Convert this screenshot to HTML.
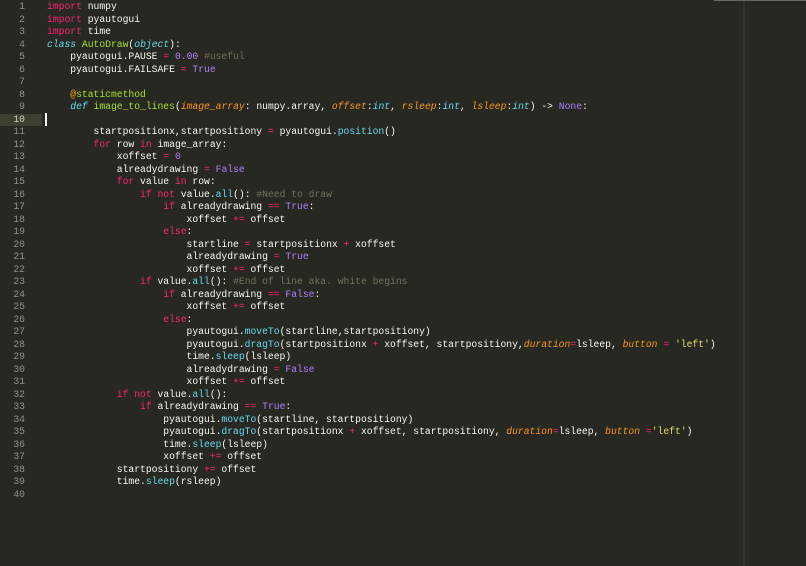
<!DOCTYPE html><html><head><meta charset="utf-8"><style>
body{margin:0;background:#272822;width:806px;height:566px;overflow:hidden;position:relative}
.g{position:absolute;left:0;top:0;width:42px}
.c{position:absolute;left:47px;top:0}
.l{height:12.5px;line-height:12.5px;font-family:"Liberation Mono",monospace;font-size:9.7px;white-space:pre;color:#f8f8f2}
.g .l{text-align:right;padding-right:17px;color:#90918b;width:25px}
.g .hl{background:#3e3d32;color:#d0d0c8}
.k{color:#f92672}.i{color:#66d9ef;font-style:italic}.n{color:#a6e22e}.p{color:#fd971f;font-style:italic}.m{color:#ae81ff}.cm{color:#75715e}.f{color:#66d9ef}.s{color:#e6db74}
.wrap{padding-top:1px}
.rul{position:absolute;left:743px;top:0;width:2px;height:566px;background:#34352f}
.cur{position:absolute;left:45px;top:113px;width:1.5px;height:13px;background:#f8f8f0}
.top{position:absolute;left:714px;top:0;width:92px;height:1px;background:#6a6a64}
</style></head><body>
<div class="rul"></div><div class="top"></div>
<div class="g wrap">
<div class="l">1</div><div class="l">2</div><div class="l">3</div><div class="l">4</div><div class="l">5</div><div class="l">6</div><div class="l">7</div><div class="l">8</div><div class="l">9</div><div class="l hl">10</div><div class="l">11</div><div class="l">12</div><div class="l">13</div><div class="l">14</div><div class="l">15</div><div class="l">16</div><div class="l">17</div><div class="l">18</div><div class="l">19</div><div class="l">20</div><div class="l">21</div><div class="l">22</div><div class="l">23</div><div class="l">24</div><div class="l">25</div><div class="l">26</div><div class="l">27</div><div class="l">28</div><div class="l">29</div><div class="l">30</div><div class="l">31</div><div class="l">32</div><div class="l">33</div><div class="l">34</div><div class="l">35</div><div class="l">36</div><div class="l">37</div><div class="l">38</div><div class="l">39</div><div class="l">40</div>
</div>
<div class="cur"></div>
<div class="c wrap">
<div class="l"><span class="k">import</span> numpy</div>
<div class="l"><span class="k">import</span> pyautogui</div>
<div class="l"><span class="k">import</span> time</div>
<div class="l"><span class="i">class</span> <span class="n">AutoDraw</span>(<span class="i">object</span>):</div>
<div class="l">    pyautogui.PAUSE <span class="k">=</span> <span class="m">0.00</span> <span class="cm">#useful</span></div>
<div class="l">    pyautogui.FAILSAFE <span class="k">=</span> <span class="m">True</span></div>
<div class="l"> </div>
<div class="l">    <span class="p" style="font-style:normal">@</span><span class="n">staticmethod</span></div>
<div class="l">    <span class="i">def</span> <span class="n">image_to_lines</span>(<span class="p">image_array</span>: numpy.array, <span class="p">offset</span>:<span class="i">int</span>, <span class="p">rsleep</span>:<span class="i">int</span>, <span class="p">lsleep</span>:<span class="i">int</span>) -&gt; <span class="m">None</span>:</div>
<div class="l"> </div>
<div class="l">        startpositionx,startpositiony <span class="k">=</span> pyautogui.<span class="f">position</span>()</div>
<div class="l">        <span class="k">for</span> row <span class="k">in</span> image_array:</div>
<div class="l">            xoffset <span class="k">=</span> <span class="m">0</span></div>
<div class="l">            alreadydrawing <span class="k">=</span> <span class="m">False</span></div>
<div class="l">            <span class="k">for</span> value <span class="k">in</span> row:</div>
<div class="l">                <span class="k">if</span> <span class="k">not</span> value.<span class="f">all</span>(): <span class="cm">#Need to draw</span></div>
<div class="l">                    <span class="k">if</span> alreadydrawing <span class="k">==</span> <span class="m">True</span>:</div>
<div class="l">                        xoffset <span class="k">+=</span> offset</div>
<div class="l">                    <span class="k">else</span>:</div>
<div class="l">                        startline <span class="k">=</span> startpositionx <span class="k">+</span> xoffset</div>
<div class="l">                        alreadydrawing <span class="k">=</span> <span class="m">True</span></div>
<div class="l">                        xoffset <span class="k">+=</span> offset</div>
<div class="l">                <span class="k">if</span> value.<span class="f">all</span>(): <span class="cm">#End of line aka. white begins</span></div>
<div class="l">                    <span class="k">if</span> alreadydrawing <span class="k">==</span> <span class="m">False</span>:</div>
<div class="l">                        xoffset <span class="k">+=</span> offset</div>
<div class="l">                    <span class="k">else</span>:</div>
<div class="l">                        pyautogui.<span class="f">moveTo</span>(startline,startpositiony)</div>
<div class="l">                        pyautogui.<span class="f">dragTo</span>(startpositionx <span class="k">+</span> xoffset, startpositiony,<span class="p">duration</span><span class="k">=</span>lsleep, <span class="p">button</span> <span class="k">=</span> <span class="s">'left'</span>)</div>
<div class="l">                        time.<span class="f">sleep</span>(lsleep)</div>
<div class="l">                        alreadydrawing <span class="k">=</span> <span class="m">False</span></div>
<div class="l">                        xoffset <span class="k">+=</span> offset</div>
<div class="l">            <span class="k">if</span> <span class="k">not</span> value.<span class="f">all</span>():</div>
<div class="l">                <span class="k">if</span> alreadydrawing <span class="k">==</span> <span class="m">True</span>:</div>
<div class="l">                    pyautogui.<span class="f">moveTo</span>(startline, startpositiony)</div>
<div class="l">                    pyautogui.<span class="f">dragTo</span>(startpositionx <span class="k">+</span> xoffset, startpositiony, <span class="p">duration</span><span class="k">=</span>lsleep, <span class="p">button</span> <span class="k">=</span><span class="s">'left'</span>)</div>
<div class="l">                    time.<span class="f">sleep</span>(lsleep)</div>
<div class="l">                    xoffset <span class="k">+=</span> offset</div>
<div class="l">            startpositiony <span class="k">+=</span> offset</div>
<div class="l">            time.<span class="f">sleep</span>(rsleep)</div>
<div class="l"> </div>
</div>
</body></html>
